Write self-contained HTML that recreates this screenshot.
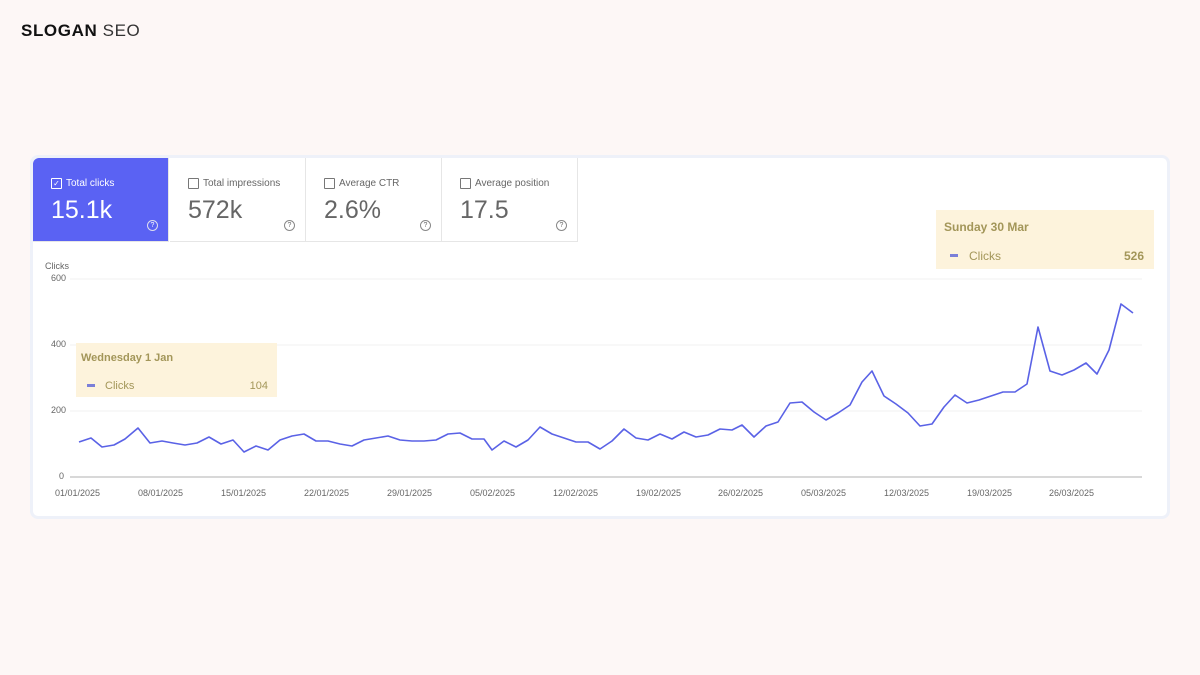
<!DOCTYPE html><html><head><style>
body{margin:0;width:1200px;height:675px;background:#fdf7f6;font-family:"Liberation Sans",sans-serif;position:relative;overflow:hidden}
.logo{position:absolute;left:21px;top:21px;font-size:17px;letter-spacing:.6px;color:#111}
.logo span{color:#333}
.card{position:absolute;left:30px;top:155px;width:1140px;height:364px;background:#fff;border-radius:8px;border:3px solid #eef1f9;box-sizing:border-box}
.tab{position:absolute;top:158px;width:136px;height:84px;box-sizing:border-box;border-right:1px solid #e6e6e6;border-bottom:1px solid #e6e6e6;color:#666}
.tab .l{position:absolute;left:18px;top:20px;font-size:10px;display:flex;align-items:center;gap:4px}
.tab .l i{width:9px;height:9px;border:1px solid #777;display:inline-block;border-radius:1px}
.tab .v{position:absolute;left:18px;top:38px;font-size:25px}
.tab .q{position:absolute;right:10px;bottom:10px;width:9px;height:9px;border:1px solid #888;border-radius:50%;font-size:7px;text-align:center;line-height:9px}
.blue{background:#5a62f3;color:#fff;border-radius:6px 0 0 0}
.blue .l i{border-color:#fff}
.blue .q{border-color:#dde}
.tip{position:absolute;background:#fdf3dc;color:#a39659;font-size:11px}
.ax{position:absolute;font-size:9px;color:#666}
</style></head><body>
<div class="logo"><b>SLOGAN</b> <span>SEO</span></div>
<div class="card"></div>
<div class="tab blue" style="left:33px"><div class="l"><i style="font-size:8px;line-height:9px;text-align:center;font-style:normal">✓</i>Total clicks</div><div class="v">15.1k</div><div class="q">?</div></div>
<div class="tab" style="left:170px"><div class="l"><i></i>Total impressions</div><div class="v">572k</div><div class="q">?</div></div>
<div class="tab" style="left:306px"><div class="l"><i></i>Average CTR</div><div class="v">2.6%</div><div class="q">?</div></div>
<div class="tab" style="left:442px"><div class="l"><i></i>Average position</div><div class="v">17.5</div><div class="q">?</div></div>
<div class="ax" style="left:45px;top:261px">Clicks</div>
<div class="ax" style="left:51px;top:273px">600</div>
<div class="ax" style="left:51px;top:339px">400</div>
<div class="ax" style="left:51px;top:405px">200</div>
<div class="ax" style="left:59px;top:471px">0</div>
<svg style="position:absolute;left:0;top:0" width="1200" height="675">
<g stroke="#f0f0f0" stroke-width="1"><line x1="70" y1="279" x2="1142" y2="279"/><line x1="70" y1="345" x2="1142" y2="345"/><line x1="70" y1="411" x2="1142" y2="411"/></g>
<line x1="70" y1="477" x2="1142" y2="477" stroke="#ccc" stroke-width="1.5"/>
<polyline fill="none" stroke="#5a62e6" stroke-width="1.6" stroke-linejoin="round" points="79,442 91,438 102,447 114,445 125,439 138,428 150,443 162,441 173,443 185,445 197,443 209,437 221,444 233,440 244,452 256,446 268,450 280,440 292,436 304,434 316,441 328,441 340,444 352,446 364,440 376,438 388,436 400,440 412,441 424,441 436,440 448,434 460,433 472,439 484,439 492,450 504,441 516,447 528,440 540,427 552,434 564,438 576,442 588,442 600,449 612,441 624,429 636,438 648,440 660,434 672,439 684,432 696,437 708,435 720,429 732,430 742,425 754,437 766,426 778,422 790,403 802,402 814,412 826,420 838,413 850,405 862,382 872,371 884,396 896,404 908,413 920,426 932,424 944,407 955,395 967,403 979,400 991,396 1003,392 1015,392 1027,384 1038,327 1050,371 1062,375 1074,370 1086,363 1097,374 1109,350 1121,304 1133,313"/>
</svg>
<div class="ax" style="left:55px;top:488px">01/01/2025</div>
<div class="ax" style="left:138px;top:488px">08/01/2025</div>
<div class="ax" style="left:221px;top:488px">15/01/2025</div>
<div class="ax" style="left:304px;top:488px">22/01/2025</div>
<div class="ax" style="left:387px;top:488px">29/01/2025</div>
<div class="ax" style="left:470px;top:488px">05/02/2025</div>
<div class="ax" style="left:553px;top:488px">12/02/2025</div>
<div class="ax" style="left:636px;top:488px">19/02/2025</div>
<div class="ax" style="left:718px;top:488px">26/02/2025</div>
<div class="ax" style="left:801px;top:488px">05/03/2025</div>
<div class="ax" style="left:884px;top:488px">12/03/2025</div>
<div class="ax" style="left:967px;top:488px">19/03/2025</div>
<div class="ax" style="left:1049px;top:488px">26/03/2025</div>
<div class="tip" style="left:76px;top:343px;width:201px;height:54px"><b style="position:absolute;left:5px;top:9px">Wednesday 1 Jan</b><span style="position:absolute;left:11px;top:41px;width:8px;height:3px;background:#7b7fd8"></span><span style="position:absolute;left:29px;top:37px">Clicks</span><b style="position:absolute;right:9px;top:37px;font-weight:normal">104</b></div>
<div class="tip" style="left:936px;top:210px;width:218px;height:59px;font-size:12px"><b style="position:absolute;left:8px;top:10px">Sunday 30 Mar</b><span style="position:absolute;left:14px;top:44px;width:8px;height:3px;background:#7b7fd8"></span><span style="position:absolute;left:33px;top:39px">Clicks</span><b style="position:absolute;right:10px;top:39px">526</b></div>
</body></html>
